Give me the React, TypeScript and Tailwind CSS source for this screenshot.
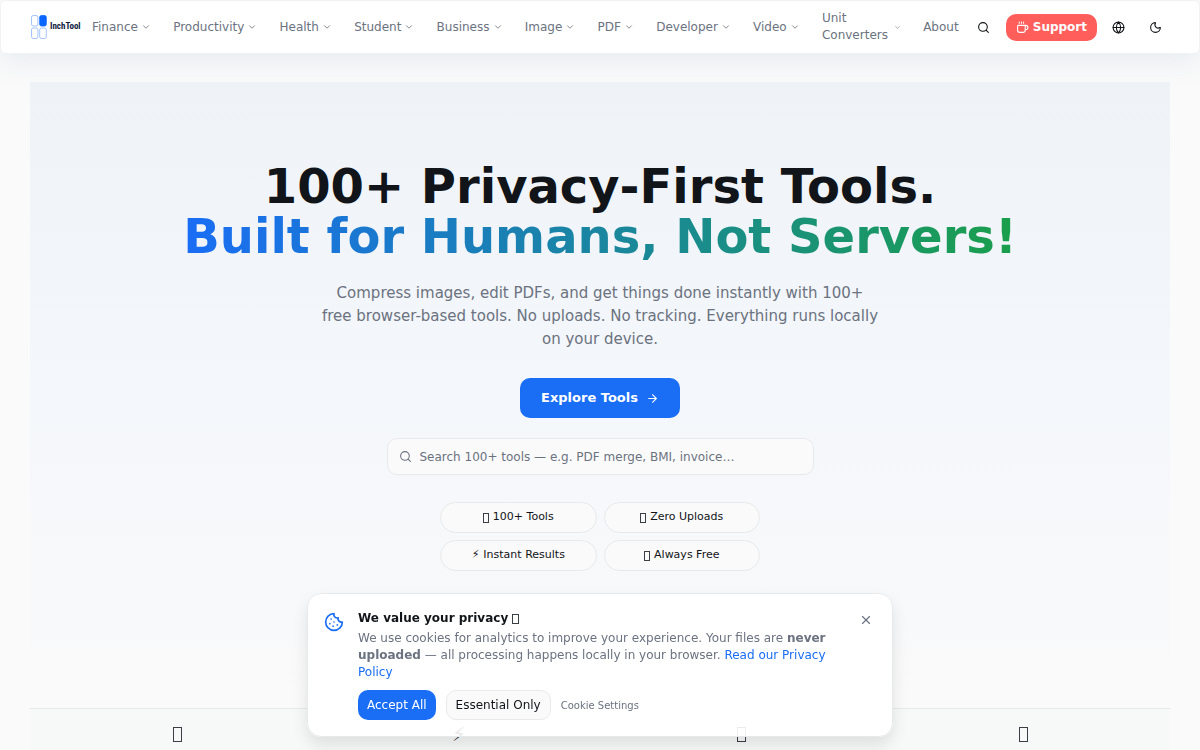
import { ArrowRight, ChevronDown, Coffee, Cookie, Globe, Moon, Search, X } from "lucide-react";

const navItems = [
  "Finance",
  "Productivity",
  "Health",
  "Student",
  "Business",
  "Image",
  "PDF",
  "Developer",
  "Video",
];

const badges = [
  { label: "100+ Tools" },
  { label: "Zero Uploads" },
  { label: "Instant Results", icon: "⚡" },
  { label: "Always Free" },
];

const stats = [
  { id: "tools" },
  { id: "speed", icon: "⚡" },
  { id: "privacy" },
  { id: "global" },
];

// Empty glyph box used where an item has no symbol of its own
const GlyphBox = ({ className }: { className: string }) => (
  <span aria-hidden="true" className={`inline-block border border-[#3a3f45] ${className}`} />
);

const Logo = () => (
  <a href="#" aria-label="InchTool home" className="flex shrink-0 items-center gap-[3px]">
    <svg width="16" height="24" viewBox="0 0 16 24" fill="none" stroke="#8db4fb" strokeWidth="0.8">
      <rect x="0.5" y="0.5" width="6.4" height="10.5" rx="1.8" />
      <rect x="8.7" y="0.5" width="6.6" height="10.5" rx="1.8" fill="#0a66ff" stroke="#0a66ff" />
      <rect x="0.5" y="13" width="6.4" height="10.5" rx="1.8" />
      <rect x="8.7" y="13" width="6.6" height="10.5" rx="1.8" />
    </svg>
    <span className="w-8 font-['Roboto_Condensed','Roboto',sans-serif] text-[9px] font-bold text-[#0f1b3d]">
      InchTool
    </span>
  </a>
);

const Header = () => (
  <header className="sticky top-0 z-20 rounded-md border border-[#f1f2f3] bg-white shadow-[0_8px_28px_rgba(100,140,180,0.12)]">
    <div className="flex h-[52px] items-center pr-[29px] pl-[30px]">
      <Logo />
      <nav className="mx-[10px] flex flex-1 items-center justify-between text-[12px] text-[#6b7280]">
        {navItems.map((item) => (
          <button key={item} type="button" className="flex items-center gap-[3px]">
            {item}
            <ChevronDown size={10} />
          </button>
        ))}
        <button type="button" className="flex items-center gap-1 text-left leading-[17px]">
          <span className="w-[68px]">Unit Converters</span>
          <ChevronDown size={7} />
        </button>
        <a href="#about">About</a>
      </nav>
      <div className="flex items-center text-[#111418]">
        <button type="button" aria-label="Search" className="p-2">
          <Search size={13} />
        </button>
        <a
          href="#support"
          className="ml-2 flex h-[27px] items-center gap-1 rounded-[10px] bg-[#ff5e5b] px-[10px] text-[12px] font-bold text-white"
        >
          <Coffee size={13} />
          Support
        </a>
        <button type="button" aria-label="Language" className="ml-[7px] p-2">
          <Globe size={13} />
        </button>
        <button type="button" aria-label="Dark mode" className="ml-2 p-2">
          <Moon size={13} />
        </button>
      </div>
    </div>
  </header>
);

const Hero = () => (
  <section className="flex flex-col items-center bg-linear-to-b from-[#eff3f7] via-[#f4f7fb] to-[#fafafa] px-4 pt-[79px] pb-[137px] text-center">
    <h1 className="text-[48px] leading-[50px] font-bold text-[#111418]">
      100+ Privacy-First Tools.
      <span className="block">
        <span className="bg-linear-to-r/srgb from-[#1a6df5] to-[#1a9f4b] bg-clip-text text-transparent">
          Built for Humans, Not Servers!
        </span>
      </span>
    </h1>
    <p className="mt-[21px] max-w-[560px] text-[15px] leading-[23px] text-[#6b7280]">
      Compress images, edit PDFs, and get things done instantly with 100+ free browser-based tools. No
      uploads. No tracking. Everything runs locally on your device.
    </p>
    <a
      href="#tools"
      className="mt-[27px] flex h-10 items-center gap-2 rounded-[10px] bg-[#1a6df5] px-[21px] text-[13px] font-bold text-white"
    >
      Explore Tools
      <ArrowRight size={13} />
    </a>
    <label className="mt-5 flex h-[37px] w-full max-w-[427px] items-center gap-2 rounded-[10px] border border-[#e7eaec] bg-[#fafafa] px-[11px] text-[#6b7280]">
      <Search size={13} className="shrink-0" />
      <input
        type="search"
        aria-label="Search tools"
        placeholder="Search 100+ tools — e.g. PDF merge, BMI, invoice…"
        className="w-full bg-transparent text-[12px] outline-none placeholder:text-[#6b7280]"
      />
    </label>
    <ul className="mt-[27px] grid w-full max-w-[320px] grid-cols-2 gap-[7px] text-[11px] text-[#111418]">
      {badges.map(({ label, icon }) => (
        <li
          key={label}
          className="flex h-[31px] items-center justify-center gap-1 rounded-full border border-[#e7eaec] bg-[#fafafa]"
        >
          {icon ? <span>{icon}</span> : <GlyphBox className="h-[10px] w-[6px]" />}
          {label}
        </li>
      ))}
    </ul>
  </section>
);

const Stats = () => (
  <section className="grid flex-1 grid-cols-4 border-t border-[#e7eaec] bg-[#f7f8f8] px-1.5 pt-[10px] text-center text-[20px] text-[#111418]">
    {stats.map(({ id, icon }) => (
      <div key={id} className="flex h-[30px] items-center justify-center">
        {icon ?? <GlyphBox className="h-[15px] w-[9px]" />}
      </div>
    ))}
  </section>
);

const CookieBanner = () => (
  <aside
    aria-label="Cookie consent"
    className="fixed inset-x-4 bottom-[13px] z-30 mx-auto flex max-w-[586px] items-start gap-[14px] rounded-[14px] border border-[#e7eaec] bg-white/90 px-4 py-4 shadow-[0_8px_16px_rgba(0,0,0,0.1)]"
  >
    <Cookie size={20} className="mt-[2px] shrink-0 text-[#1a6df5]" />
    <div className="flex-1">
      <h2 className="flex items-center gap-1 text-[12px] leading-[17px] font-bold text-[#111418]">
        We value your privacy
        <GlyphBox className="h-[10px] w-[7px]" />
      </h2>
      <p className="mt-[3px] text-[12px] leading-[17px] text-[#6b7280]">
        We use cookies for analytics to improve your experience. Your files are{" "}
        <strong>never uploaded</strong> — all processing happens locally in your browser.{" "}
        <a href="#privacy" className="text-[#1a6df5]">Read our Privacy Policy</a>
      </p>
      <div className="mt-[9px] flex items-center gap-[10px] text-[12px]">
        <button type="button" className="h-[30px] rounded-[10px] bg-[#1a6df5] px-[9px] text-white">
          Accept All
        </button>
        <button
          type="button"
          className="h-[30px] rounded-[10px] border border-[#e7eaec] bg-[#fafafa] px-[9px] text-[#111418]"
        >
          Essential Only
        </button>
        <button type="button" className="text-[10px] text-[#6b7280]">Cookie Settings</button>
      </div>
    </div>
    <button type="button" aria-label="Close" className="p-[3px] text-[#6b7280]">
      <X size={14} />
    </button>
  </aside>
);

const App = () => {
  return (
    <div className="flex min-h-screen flex-col bg-[#fafafa] font-['DejaVu_Sans',sans-serif]">
      <Header />
      <main className="mx-[30px] mt-[28px] flex flex-1 flex-col">
        <Hero />
        <Stats />
      </main>
      <CookieBanner />
    </div>
  );
};

export default App;
